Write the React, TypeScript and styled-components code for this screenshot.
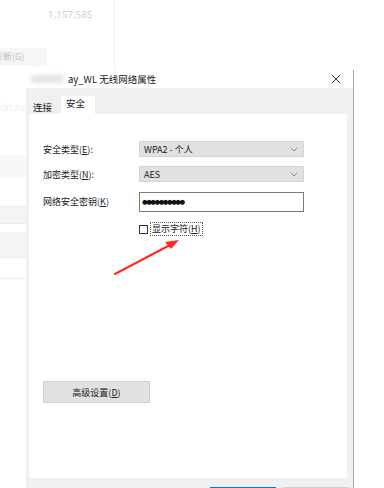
import React from "react";
import styled, { createGlobalStyle } from "styled-components";

const Global = createGlobalStyle`
  html, body {
    margin: 0;
    padding: 0;
    background: #ffffff;
  }
  body {
    font-family: "Noto Sans CJK SC", "Noto Sans", sans-serif;
    color: #1e1e1e;
  }
`;

const Desktop = styled.div`
  position: relative;
  width: 384px;
  height: 488px;
  overflow: hidden;
  background: #ffffff;
`;

// 背后的应用窗口
const BgTop = styled.div`
  height: 70px;
  width: 115px;
  border-right: 1px solid #f0f0f0;
  display: flex;
  flex-direction: column;
  box-sizing: border-box;
`;

const BgNumber = styled.div`
  margin: 8px 0 0 48px;
  font-family: "Open Sans", "Noto Sans", sans-serif;
  font-size: 9.5px;
  color: #c9c9c9;
  letter-spacing: 0.2px;
`;

const BgButton = styled.div`
  margin: 27px 0 0 -6px;
  width: 53px;
  height: 18px;
  background: #f6f6f6;
  font-size: 9px;
  line-height: 18px;
  color: #bdbdbd;
`;

const BgSide = styled.div`
  width: 26px;
  display: flex;
  flex-direction: column;
`;

const Band = styled.div<{ $h: number; $bg?: string; $line?: boolean }>`
  height: ${(p) => p.$h}px;
  background: ${(p) => p.$bg || "#ffffff"};
  border-bottom: ${(p) => (p.$line ? "1px solid #ececec" : "none")};
  font-family: "Open Sans", sans-serif;
  font-size: 10px;
  line-height: 14px;
  color: #eeeeee;
  overflow: hidden;
  white-space: nowrap;
`;

// 属性对话框
const Dialog = styled.div`
  position: absolute;
  left: 26px;
  top: 70px;
  width: 328px;
  height: 450px;
  display: flex;
  flex-direction: column;
  border-right: 1px solid #a9a9a9;
  box-sizing: border-box;
`;

const TitleBar = styled.div`
  height: 18px;
  flex-shrink: 0;
  background: #ffffff;
  display: flex;
  align-items: center;
  padding: 0 12px 0 4px;
  font-size: 9.5px;
`;

const Blur = styled.span`
  display: inline-block;
  width: 34px;
  height: 8px;
  border-radius: 4px;
  background: #e4e4e4;
  filter: blur(2px);
  margin-right: 4px;
`;

const Title = styled.span`
  flex: 1;
  color: #1a1a1a;
`;

const Close = styled.span`
  width: 10px;
  height: 10px;
  display: flex;
  align-items: center;
  justify-content: center;
`;

const Body = styled.div`
  flex: 1;
  background: #f0f0f0;
  display: flex;
  flex-direction: column;
  padding: 0 6px 0 3px;
`;

const Tabs = styled.div`
  height: 26px;
  flex-shrink: 0;
  display: flex;
  align-items: flex-end;
`;

const Tab = styled.div<{ $active?: boolean }>`
  height: ${(p) => (p.$active ? 18 : 16)}px;
  width: ${(p) => (p.$active ? 34 : 32)}px;
  padding-left: ${(p) => (p.$active ? 5 : 4)}px;
  background: ${(p) => (p.$active ? "#ffffff" : "#f0f0f0")};
  font-size: 9.5px;
  line-height: ${(p) => (p.$active ? 15 : 18)}px;
  color: #1a1a1a;
  box-sizing: border-box;
  white-space: nowrap;
`;

const Panel = styled.div`
  height: 364px;
  flex-shrink: 0;
  background: #ffffff;
  padding: 27px 0 0 14px;
  box-sizing: border-box;
  display: flex;
  flex-direction: column;
`;

const Form = styled.div`
  display: grid;
  grid-template-columns: 96px 165px;
  row-gap: 9px;
  align-items: center;
`;

const Label = styled.div`
  font-size: 9px;
  color: #222;
  white-space: nowrap;
`;

const U = styled.span`
  text-decoration: underline;
`;

const Select = styled.div`
  height: 16px;
  background: #e1e1e1;
  border: 1px solid #d4d4d4;
  box-sizing: border-box;
  display: flex;
  align-items: center;
  justify-content: space-between;
  padding: 0 5px 0 4px;
  font-size: 9px;
  color: #1a1a1a;
`;

const Input = styled.div`
  height: 20px;
  margin-top: 1px;
  border: 1.5px solid #7a7a7a;
  box-sizing: border-box;
  background: #fff;
  display: flex;
  align-items: center;
  padding-left: 2px;
  font-family: "DejaVu Sans", sans-serif;
  font-size: 6.5px;
  letter-spacing: -1.5px;
  color: #111;
`;

const CheckRow = styled.div`
  grid-column: 2;
  display: flex;
  align-items: center;
  gap: 2px;
  margin-top: 1px;
`;

const Box = styled.span`
  width: 9px;
  height: 9px;
  border: 1px solid #333;
  box-sizing: border-box;
  background: #fff;
`;

const CheckText = styled.span`
  font-size: 9px;
  color: #222;
  border: 1px dotted #555;
  padding: 0 1px;
  line-height: 12px;
`;

const AdvButton = styled.div`
  margin-top: 145px;
  width: 107px;
  height: 22px;
  background: #e1e1e1;
  border: 1px solid #d0d0d0;
  box-sizing: border-box;
  display: flex;
  align-items: center;
  justify-content: center;
  font-size: 9px;
  color: #222;
`;

const Footer = styled.div`
  display: flex;
  justify-content: flex-end;
  gap: 7px;
  padding: 9px 0 0;
  margin-right: -2px;
`;

const FootButton = styled.div<{ $primary?: boolean }>`
  width: 66px;
  height: 22px;
  background: #e1e1e1;
  border-style: solid;
  border-color: ${(p) => (p.$primary ? "#0078d7" : "#cfcfcf")};
  border-width: ${(p) => (p.$primary ? "2px" : "1px")};
  box-sizing: border-box;
`;

const Arrow = styled.svg`
  position: absolute;
  left: 110px;
  top: 236px;
  pointer-events: none;
`;

const Chevron = () => (
  <svg width="8" height="5" viewBox="0 0 8 5">
    <path d="M0.8 0.8 L4 4 L7.2 0.8" fill="none" stroke="#8a8a8a" strokeWidth="1" />
  </svg>
);

export default function App() {
  return (
    <>
      <Global />
      <Desktop>
        <BgTop>
          <BgNumber>1,157,585</BgNumber>
          <BgButton>诊断(G)</BgButton>
        </BgTop>
        <BgSide>
          <Band $h={30} />
          <Band $h={14}>dn.ne</Band>
          <Band $h={41} />
          <Band $h={23} $bg="#f8f8f8" />
          <Band $h={28} $line />
          <Band $h={16} $bg="#f4f4f4" $line />
          <Band $h={8} />
          <Band $h={25} $bg="#f4f4f4" $line />
          <Band $h={20} $line />
        </BgSide>

        <Dialog>
          <TitleBar>
            <Blur />
            <Title>ay_WL 无线网络属性</Title>
            <Close>
              <svg width="10" height="10" viewBox="0 0 10 10">
                <path d="M1 1 L9 9 M9 1 L1 9" stroke="#333" strokeWidth="1" />
              </svg>
            </Close>
          </TitleBar>
          <Body>
            <Tabs>
              <Tab>连接</Tab>
              <Tab $active>安全</Tab>
            </Tabs>
            <Panel>
              <Form>
                <Label>
                  安全类型(<U>E</U>):
                </Label>
                <Select>
                  <span>WPA2 - 个人</span>
                  <Chevron />
                </Select>
                <Label>
                  加密类型(<U>N</U>):
                </Label>
                <Select>
                  <span>AES</span>
                  <Chevron />
                </Select>
                <Label>
                  网络安全密钥(<U>K</U>)
                </Label>
                <Input>●●●●●●●●●●</Input>
                <CheckRow>
                  <Box />
                  <CheckText>
                    显示字符(<U>H</U>)
                  </CheckText>
                </CheckRow>
              </Form>
              <AdvButton>
                高级设置(<U>D</U>)
              </AdvButton>
            </Panel>
            <Footer>
              <FootButton $primary />
              <FootButton />
            </Footer>
          </Body>
        </Dialog>

        <Arrow width="74" height="42" viewBox="0 0 74 42">
          <path d="M5 38 L60 9" stroke="#ff2a1a" strokeWidth="2" strokeLinecap="round" />
          <path d="M69 4 L55 6 L61 13 Z" fill="#ff2a1a" />
        </Arrow>
      </Desktop>
    </>
  );
}
